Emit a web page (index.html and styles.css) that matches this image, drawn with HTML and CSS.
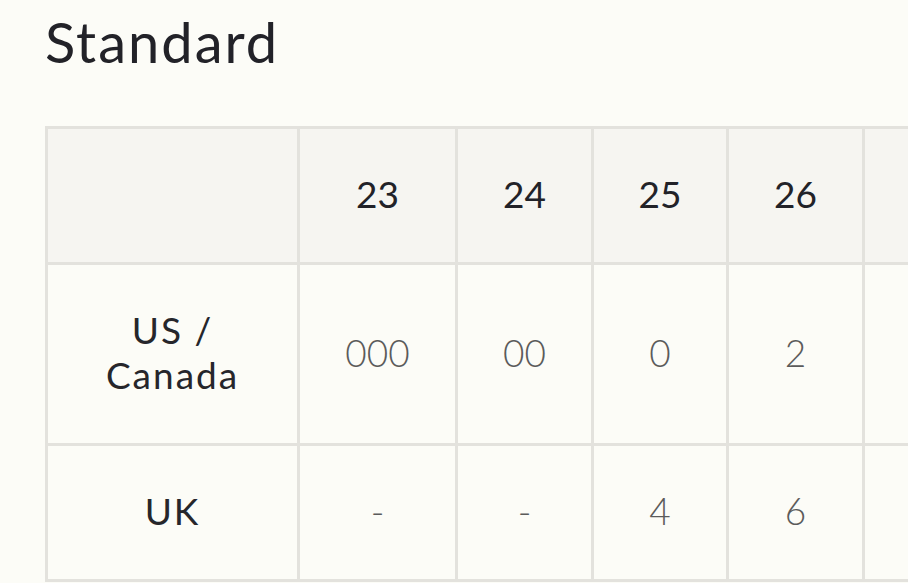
FILE: index.html
```html
<!DOCTYPE html>
<html lang="en">
<head>
<meta charset="UTF-8">
<meta name="viewport" content="width=device-width, initial-scale=1.0">
<title>Size Chart</title>
<link rel="stylesheet" href="styles.css">
</head>
<body>

<div class="size-chart">
  <h1 class="chart-title">Standard</h1>

  <div class="table-scroll">
    <table class="size-table">
      <colgroup>
        <col class="col-label">
        <col class="col-wide">
        <col class="col-size">
        <col class="col-narrow">
        <col class="col-size">
        <col class="col-size">
      </colgroup>
      <thead>
        <tr>
          <th></th>
          <th>23</th>
          <th>24</th>
          <th>25</th>
          <th>26</th>
          <th></th>
        </tr>
      </thead>
      <tbody>
        <tr>
          <td class="row-label">US /<br>Canada</td>
          <td>000</td>
          <td>00</td>
          <td>0</td>
          <td>2</td>
          <td></td>
        </tr>
        <tr>
          <td class="row-label">UK</td>
          <td>-</td>
          <td>-</td>
          <td>4</td>
          <td>6</td>
          <td></td>
        </tr>
      </tbody>
    </table>
  </div>
</div>

</body>
</html>
```

FILE: styles.css
```css
  body {
    margin: 0;
    background-color: #fcfcf7;
    font-family: Lato, "Noto Sans", sans-serif;
    color: #222228;
  }
  .size-chart {
    padding: 8px 0 0 45px;
    overflow: hidden;
  }
  .chart-title {
    margin: 0 0 51px 0;
    font-size: 56px;
    font-weight: 400;
    line-height: 67px;
    letter-spacing: 2px;
  }
  .table-scroll {
    overflow: hidden;
  }
  .size-table {
    table-layout: fixed;
    width: 956px;
    border-collapse: collapse;
    text-align: center;
  }
  .col-label {
    width: 252px;
  }
  .col-wide {
    width: 158px;
  }
  .col-size {
    width: 136px;
  }
  .col-narrow {
    width: 135px;
  }
  .size-table th,
  .size-table td {
    border: 3px solid #e3e2dd;
    padding: 42px 0 46px 0;
    font-size: 37px;
    line-height: 45px;
  }
  .size-table th {
    background-color: #f6f5f1;
    font-weight: 400;
    color: #222228;
  }
  .size-table td {
    font-weight: 300;
    color: #5b5b5b;
  }
  .size-table .row-label {
    font-weight: 400;
    color: #26262b;
    letter-spacing: 2px;
  }
```
